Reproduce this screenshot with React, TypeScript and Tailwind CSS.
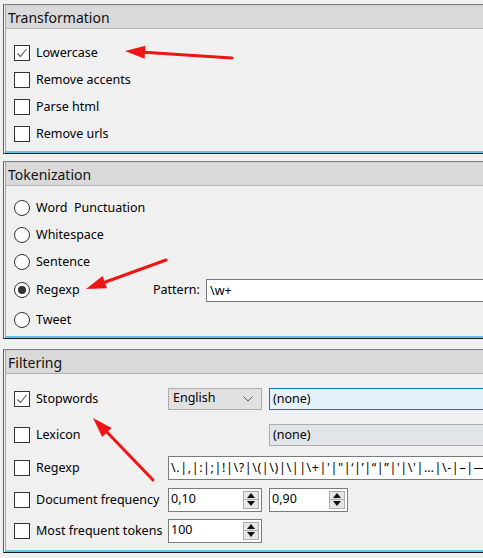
import React from "react";

function Check({ checked }: { checked?: boolean }) {
  return (
    <span className="w-4 h-4 shrink-0 border border-[#333] bg-white flex items-center justify-center">
      {checked ? (
        <svg width="14" height="14" viewBox="0 0 14 14">
          <path d="M2.5 7.5 L5.5 10.5 L11.5 3" fill="none" stroke="#555" strokeWidth="1.1" />
        </svg>
      ) : null}
    </span>
  );
}

function Radio({ checked }: { checked?: boolean }) {
  return (
    <span className="w-4 h-4 shrink-0 rounded-full border border-[#333] bg-white flex items-center justify-center">
      {checked ? <span className="w-2 h-2 rounded-full bg-[#333]" /> : null}
    </span>
  );
}

function Section({ title, children, className }: { title: string; children: React.ReactNode; className?: string }) {
  return (
    <div className={`ml-[3px] w-[520px] border-l border-t border-b border-l-[#5f5f5f] border-t-[#808080] border-b-[#1c1c1c] pl-px ${className ?? ""}`}>
      <div className="border-l border-t border-b-2 border-l-[#a9a9a9] border-t-[#cccccc] border-b-[#63c4ea]">
        <div className="h-[23px] bg-[#d9d9d9] border-b border-[#b2b2b2] pl-[2px] text-[14px] leading-[23px] text-[#111]">{title}</div>
        {children}
      </div>
    </div>
  );
}

function Spin({ value, w }: { value: string; w: string }) {
  return (
    <div className={`${w} h-[24px] border border-[#7a7a7a] bg-white flex items-center justify-between pl-[2px] pr-[2px]`}>
      <span>{value}</span>
      <span className="flex flex-col w-[16px] h-[18px]">
        <span className="h-[9px] border border-[#adadad] bg-[#e6e6e6] flex items-center justify-center">
          <svg width="8" height="5" viewBox="0 0 8 5"><path d="M0 5 L4 0 L8 5 Z" fill="#111" /></svg>
        </span>
        <span className="h-[9px] border border-[#adadad] border-t-0 bg-[#e6e6e6] flex items-center justify-center">
          <svg width="8" height="5" viewBox="0 0 8 5"><path d="M0 0 L4 5 L8 0 Z" fill="#111" /></svg>
        </span>
      </span>
    </div>
  );
}

export default function App() {
  const rowCls = "flex items-center gap-[6px]";
  return (
    <div className="relative w-[483px] h-[558px] overflow-hidden bg-[#f0f0f0] pt-[4px] font-['Noto_Sans',sans-serif] text-[12.5px] text-black">
      <Section title="Transformation">
        <div className="pl-[8px] pt-[10px] pb-[4px]">
          {[
            ["Lowercase", true],
            ["Remove accents", false],
            ["Parse html", false],
            ["Remove urls", false],
          ].map(([label, c]) => (
            <div key={label as string} className={`${rowCls} h-[27px]`}>
              <Check checked={c as boolean} />
              <span className="pt-px">{label as string}</span>
            </div>
          ))}
        </div>
      </Section>

      <Section title="Tokenization" className="mt-[7px]">
        <div className="pl-[8px] pt-[8px] pb-[2px]">
          <div className={`${rowCls} h-[27px]`}><Radio /><span className="pt-px whitespace-pre">Word  Punctuation</span></div>
          <div className={`${rowCls} h-[27px]`}><Radio /><span className="pt-px">Whitespace</span></div>
          <div className={`${rowCls} h-[27px]`}><Radio /><span className="pt-px">Sentence</span></div>
          <div className="flex items-center h-[30px]">
            <div className={`${rowCls} w-[139px]`}><Radio checked /><span className="pt-px">Regexp</span></div>
            <span className="w-[53px] pt-px">Pattern:</span>
            <div className="flex-1 h-[23px] border border-[#7a7a7a] bg-white pl-[3px] leading-[21px]">\w+</div>
          </div>
          <div className={`${rowCls} h-[29px]`}><Radio /><span className="pt-px">Tweet</span></div>
        </div>
      </Section>

      <Section title="Filtering" className="mt-[10px]">
        <div className="pl-[8px] pt-[6px] pb-[4px]">
          <div className="flex items-center h-[37px]">
            <div className={`${rowCls} w-[154px]`}><Check checked /><span className="pt-px">Stopwords</span></div>
            <div className="w-[94px] h-[22px] border border-[#adadad] bg-[#e1e1e1] flex items-center justify-between pl-[4px] pr-[8px]">
              <span>English</span>
              <svg width="10" height="6" viewBox="0 0 10 6"><path d="M0.5 0.5 L5 5 L9.5 0.5" fill="none" stroke="#555" strokeWidth="1" /></svg>
            </div>
            <div className="ml-[7px] flex-1 h-[22px] border border-[#0078d7] bg-[#e5f1fb] pl-[3px] leading-[20px]">(none)</div>
          </div>
          <div className="flex items-center h-[35px]">
            <div className={`${rowCls} w-[154px]`}><Check /><span className="pt-px">Lexicon</span></div>
            <div className="w-[94px]" />
            <div className="ml-[7px] flex-1 h-[22px] border border-[#adadad] bg-[#e1e4e8] pl-[3px] leading-[20px]">(none)</div>
          </div>
          <div className="flex items-center h-[32px]">
            <div className={`${rowCls} w-[154px]`}><Check /><span className="pt-px">Regexp</span></div>
            <div className="flex-1 h-[24px] border border-[#7a7a7a] bg-white pl-[2px] leading-[22px] whitespace-nowrap overflow-hidden tracking-[0.6px]">
              {"\\.|,|:|;|!|\\?|\\(|\\)|\\||\\+|'|\"|‘|’|“|”|'|\\'|…|\\-|–|—|\\$|&"}
            </div>
          </div>
          <div className="flex items-center h-[31px]">
            <div className={`${rowCls} w-[154px]`}><Check /><span className="pt-px">Document frequency</span></div>
            <Spin value="0,10" w="w-[94px]" />
            <div className="ml-[7px]"><Spin value="0,90" w="w-[79px]" /></div>
          </div>
          <div className="flex items-center h-[31px]">
            <div className={`${rowCls} w-[154px]`}><Check /><span className="pt-px">Most frequent tokens</span></div>
            <Spin value="100" w="w-[94px]" />
          </div>
        </div>
      </Section>

      <svg className="absolute inset-0 pointer-events-none" width="483" height="558">
        <g fill="#ee1515" stroke="#ee1515" strokeLinecap="round">
          <line x1="140" y1="52" x2="232" y2="58" strokeWidth="3" />
          <polygon points="125,51 144.6,58.8 145.4,45.8" stroke="none" />
          <line x1="100" y1="284" x2="166" y2="260" strokeWidth="3" />
          <polygon points="86,289 107,288.3 102.6,276.1" stroke="none" />
          <line x1="104" y1="429" x2="153" y2="480" strokeWidth="3" />
          <polygon points="93,418 102.2,436.9 111.6,427.9" stroke="none" />
        </g>
      </svg>
    </div>
  );
}
